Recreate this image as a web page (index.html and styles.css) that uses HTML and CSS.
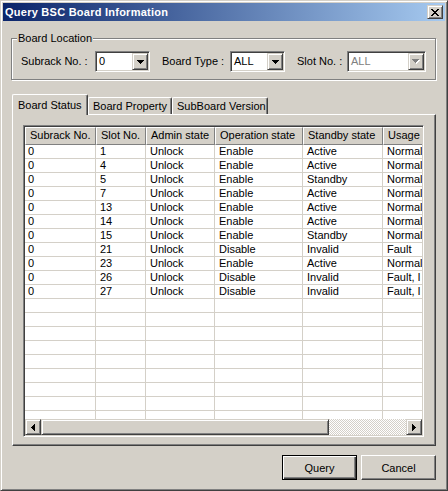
FILE: index.html
```html
<!DOCTYPE html>
<html>
<head>
<meta charset="utf-8">
<title>Query BSC Board Information</title>
<link rel="stylesheet" href="styles.css">
</head>
<body>
<div class="window">
  <div class="titlebar">
    <span class="title">Query BSC Board Information</span>
    <span class="close-btn"><svg width="8" height="7" viewBox="0 0 8 7" shape-rendering="crispEdges"><path fill="#000" d="M0 0h2v1H0zM6 0h2v1H6zM1 1h2v1H1zM5 1h2v1H5zM2 2h4v1H2zM3 3h2v1H3zM2 4h4v1H2zM1 5h2v1H1zM5 5h2v1H5zM0 6h2v1H0zM6 6h2v1H6z"/></svg></span>
  </div>
  <div class="client">
    <div class="group">
      <div class="legend">Board Location</div>
      <div class="loc-row">
        <span class="lbl lbl-subrack">Subrack No. :</span>
        <div class="combo combo-subrack">
          <span class="combo-text">0</span>
          <span class="combo-btn"><svg width="7" height="4" viewBox="0 0 7 4" shape-rendering="crispEdges"><path fill="#000" d="M0 0h7v1H0zM1 1h5v1H1zM2 2h3v1H2zM3 3h1v1H3z"/></svg></span>
        </div>
        <span class="lbl lbl-type">Board Type :</span>
        <div class="combo combo-type">
          <span class="combo-text">ALL</span>
          <span class="combo-btn"><svg width="7" height="4" viewBox="0 0 7 4" shape-rendering="crispEdges"><path fill="#000" d="M0 0h7v1H0zM1 1h5v1H1zM2 2h3v1H2zM3 3h1v1H3z"/></svg></span>
        </div>
        <span class="lbl lbl-slot">Slot No. :</span>
        <div class="combo combo-slot disabled">
          <span class="combo-text">ALL</span>
          <span class="combo-btn"><svg width="8" height="5" viewBox="0 0 8 5" shape-rendering="crispEdges"><path fill="#fff" d="M1 1h7v1H1zM2 2h5v1H2zM3 3h3v1H3zM4 4h1v1H4z"/><path fill="#808080" d="M0 0h7v1H0zM1 1h5v1H1zM2 2h3v1H2zM3 3h1v1H3z"/></svg></span>
        </div>
      </div>
    </div>

    <div class="tabs">
      <div class="tab active tab-status">Board Status</div>
      <div class="tab tab-property">Board Property</div>
      <div class="tab tab-version">SubBoard Version</div>
    </div>

    <div class="panel">
      <div class="list">
        <div class="grid">
          <div class="row head">
            <div class="cell">Subrack No.</div><div class="cell">Slot No.</div><div class="cell">Admin state</div><div class="cell">Operation state</div><div class="cell">Standby state</div><div class="cell">Usage state</div>
          </div>
          <div class="row"><div class="cell">0</div><div class="cell">1</div><div class="cell">Unlock</div><div class="cell">Enable</div><div class="cell">Active</div><div class="cell">Normal</div></div>
          <div class="row"><div class="cell">0</div><div class="cell">4</div><div class="cell">Unlock</div><div class="cell">Enable</div><div class="cell">Active</div><div class="cell">Normal</div></div>
          <div class="row"><div class="cell">0</div><div class="cell">5</div><div class="cell">Unlock</div><div class="cell">Enable</div><div class="cell">Standby</div><div class="cell">Normal</div></div>
          <div class="row"><div class="cell">0</div><div class="cell">7</div><div class="cell">Unlock</div><div class="cell">Enable</div><div class="cell">Active</div><div class="cell">Normal</div></div>
          <div class="row"><div class="cell">0</div><div class="cell">13</div><div class="cell">Unlock</div><div class="cell">Enable</div><div class="cell">Active</div><div class="cell">Normal</div></div>
          <div class="row"><div class="cell">0</div><div class="cell">14</div><div class="cell">Unlock</div><div class="cell">Enable</div><div class="cell">Active</div><div class="cell">Normal</div></div>
          <div class="row"><div class="cell">0</div><div class="cell">15</div><div class="cell">Unlock</div><div class="cell">Enable</div><div class="cell">Standby</div><div class="cell">Normal</div></div>
          <div class="row"><div class="cell">0</div><div class="cell">21</div><div class="cell">Unlock</div><div class="cell">Disable</div><div class="cell">Invalid</div><div class="cell">Fault</div></div>
          <div class="row"><div class="cell">0</div><div class="cell">23</div><div class="cell">Unlock</div><div class="cell">Enable</div><div class="cell">Active</div><div class="cell">Normal</div></div>
          <div class="row"><div class="cell">0</div><div class="cell">26</div><div class="cell">Unlock</div><div class="cell">Disable</div><div class="cell">Invalid</div><div class="cell">Fault, I</div></div>
          <div class="row"><div class="cell">0</div><div class="cell">27</div><div class="cell">Unlock</div><div class="cell">Disable</div><div class="cell">Invalid</div><div class="cell">Fault, I</div></div>
          <div class="row"><div class="cell"></div><div class="cell"></div><div class="cell"></div><div class="cell"></div><div class="cell"></div><div class="cell"></div></div>
          <div class="row"><div class="cell"></div><div class="cell"></div><div class="cell"></div><div class="cell"></div><div class="cell"></div><div class="cell"></div></div>
          <div class="row"><div class="cell"></div><div class="cell"></div><div class="cell"></div><div class="cell"></div><div class="cell"></div><div class="cell"></div></div>
          <div class="row"><div class="cell"></div><div class="cell"></div><div class="cell"></div><div class="cell"></div><div class="cell"></div><div class="cell"></div></div>
          <div class="row"><div class="cell"></div><div class="cell"></div><div class="cell"></div><div class="cell"></div><div class="cell"></div><div class="cell"></div></div>
          <div class="row"><div class="cell"></div><div class="cell"></div><div class="cell"></div><div class="cell"></div><div class="cell"></div><div class="cell"></div></div>
          <div class="row"><div class="cell"></div><div class="cell"></div><div class="cell"></div><div class="cell"></div><div class="cell"></div><div class="cell"></div></div>
          <div class="row"><div class="cell"></div><div class="cell"></div><div class="cell"></div><div class="cell"></div><div class="cell"></div><div class="cell"></div></div>
          <div class="row"><div class="cell"></div><div class="cell"></div><div class="cell"></div><div class="cell"></div><div class="cell"></div><div class="cell"></div></div>
          <div class="row"><div class="cell"></div><div class="cell"></div><div class="cell"></div><div class="cell"></div><div class="cell"></div><div class="cell"></div></div>
        </div>
        <div class="hscroll">
          <span class="sb-btn"><svg width="4" height="7" viewBox="0 0 4 7" shape-rendering="crispEdges"><path fill="#000" d="M3 0h1v7H3zM2 1h1v5H2zM1 2h1v3H1zM0 3h1v1H0z"/></svg></span>
          <span class="sb-thumb"></span>
          <span class="sb-track"></span>
          <span class="sb-btn"><svg width="4" height="7" viewBox="0 0 4 7" shape-rendering="crispEdges"><path fill="#000" d="M0 0h1v7H0zM1 1h1v5H1zM2 2h1v3H2zM3 3h1v1H3z"/></svg></span>
        </div>
      </div>
    </div>

    <div class="buttons">
      <button class="btn default">Query</button>
      <button class="btn">Cancel</button>
    </div>
  </div>
</div>
</body>
</html>
```

FILE: styles.css
```css
* {
  box-sizing: border-box;
}

html,
body {
  margin: 0;
  padding: 0;
  background: #D4D0C8;
}

body {
  font-family: "Liberation Sans", Arial, sans-serif;
  font-size: 11px;
  line-height: 13px;
  color: #000;
}

svg {
  display: block;
}

.window {
  width: 448px;
  height: 491px;
  background: #D4D0C8;
  border: 1px solid;
  border-color: #D4D0C8 #404040 #404040 #D4D0C8;
  box-shadow: inset 1px 1px 0 #fff, inset -1px -1px 0 #808080;
  padding: 2px;
  display: flex;
  flex-direction: column;
}

/* ---------- title bar ---------- */
.titlebar {
  height: 18px;
  flex-shrink: 0;
  display: flex;
  align-items: center;
  justify-content: space-between;
  padding: 0 2px;
  background: linear-gradient(to right, #0A246A, #A6CAF0);
}

.title {
  color: #fff;
  font-weight: bold;
  font-size: 11px;
  line-height: 13px;
  letter-spacing: 0.25px;
}

.close-btn {
  width: 16px;
  height: 14px;
  display: flex;
  align-items: center;
  justify-content: center;
  background: #D4D0C8;
  border: 1px solid;
  border-color: #D4D0C8 #404040 #404040 #D4D0C8;
  box-shadow: inset 1px 1px 0 #fff, inset -1px -1px 0 #808080;
}

/* ---------- client ---------- */
.client {
  flex: 1;
  display: flex;
  flex-direction: column;
  padding: 0 9px 0 8px;
}

/* group box */
.group {
  margin-top: 17px;
  border: 1px solid #808080;
  box-shadow: inset 1px 1px 0 #fff, 1px 1px 0 #fff;
  padding: 0 0 7px 9px;
  display: flex;
  flex-direction: column;
  align-items: flex-start;
}

.legend {
  margin: -7px 0 0 -4px;
  padding: 0 1px;
  background: #D4D0C8;
  line-height: 13px;
}

.loc-row {
  display: flex;
  align-items: center;
  height: 21px;
  margin-top: 6px;
}

.lbl {
  white-space: nowrap;
}

.lbl-subrack { width: 74px; }
.lbl-type { width: 68px; margin-left: 12px; }
.lbl-slot { width: 50px; margin-left: 12px; }

.combo {
  height: 21px;
  display: flex;
  background: #fff;
  border: 1px solid;
  border-color: #808080 #fff #fff #808080;
  box-shadow: inset 1px 1px 0 #404040, inset -1px -1px 0 #D4D0C8;
  padding: 1px;
}

.combo-subrack { width: 55px; }
.combo-type { width: 55px; }
.combo-slot { width: 79px; }

.combo-text {
  flex: 1;
  padding-left: 2px;
  line-height: 17px;
}

.combo.disabled .combo-text {
  color: #808080;
}

.combo-btn {
  width: 16px;
  height: 17px;
  display: flex;
  align-items: center;
  justify-content: center;
  background: #D4D0C8;
  border: 1px solid;
  border-color: #D4D0C8 #404040 #404040 #D4D0C8;
  box-shadow: inset 1px 1px 0 #fff, inset -1px -1px 0 #808080;
}

/* ---------- tabs ---------- */
.tabs {
  display: flex;
  align-items: flex-end;
  height: 20px;
  margin: 14px 0 0 1px;
}

.tab {
  height: 17px;
  border: 1px solid;
  border-color: #fff #404040 transparent #fff;
  border-bottom: none;
  border-radius: 2px 2px 0 0;
  box-shadow: inset -1px 0 0 #808080;
  padding: 2px 0 0 4px;
  white-space: nowrap;
  background: #D4D0C8;
}

.tab.active {
  height: 21px;
  margin-bottom: -1px;
  padding: 4px 0 0 5px;
  position: relative;
  z-index: 1;
}

.tab-status { width: 76px; }
.tab-property { width: 84px; }
.tab-version { width: 96px; }

.panel {
  height: 332px;
  margin-left: 1px;
  border: 1px solid;
  border-color: #fff #404040 #404040 #fff;
  box-shadow: inset -1px -1px 0 #808080;
  padding: 10px 0 0 10px;
}

/* ---------- list view ---------- */
.list {
  width: 401px;
  height: 312px;
  border: 1px solid;
  border-color: #808080 #fff #fff #808080;
  box-shadow: inset 1px 1px 0 #404040, inset -1px -1px 0 #D4D0C8;
  padding: 1px;
  background: #fff;
  display: flex;
  flex-direction: column;
}

.grid {
  flex: 1;
  min-height: 0;
  overflow: hidden;
}

.row {
  display: grid;
  grid-template-columns: 71px 50px 69px 88px 80px 148px;
  width: max-content;
  height: 14px;
}

.cell {
  border-right: 1px solid #D4D0C8;
  border-bottom: 1px solid #D4D0C8;
  padding-left: 4px;
  line-height: 13px;
  white-space: nowrap;
  overflow: hidden;
}

.cell:first-child {
  padding-left: 3px;
}

.row.head {
  height: 18px;
}

.head .cell {
  background: #D4D0C8;
  border-top: 1px solid #fff;
  border-left: 1px solid #fff;
  border-right: 1px solid #808080;
  border-bottom: 1px solid #808080;
  padding-left: 4px;
  line-height: 14px;
}

/* horizontal scrollbar */
.hscroll {
  display: flex;
  height: 16px;
  flex-shrink: 0;
}

.sb-btn,
.sb-thumb {
  height: 16px;
  background: #D4D0C8;
  border: 1px solid;
  border-color: #D4D0C8 #404040 #404040 #D4D0C8;
  box-shadow: inset 1px 1px 0 #fff, inset -1px -1px 0 #808080;
}

.sb-btn {
  width: 16px;
  flex-shrink: 0;
  display: flex;
  align-items: center;
  justify-content: center;
}

.sb-thumb {
  width: 288px;
  flex-shrink: 0;
}

.sb-track {
  flex: 1;
  background: repeating-conic-gradient(#fff 0 25%, #D4D0C8 0 50%) 0 0 / 2px 2px;
}

/* ---------- buttons ---------- */
.buttons {
  display: flex;
  justify-content: flex-end;
  gap: 4px;
  margin-top: 9px;
}

.btn {
  width: 75px;
  height: 25px;
  padding: 0;
  font-family: "Liberation Sans", Arial, sans-serif;
  font-size: 11px;
  color: #000;
  background: #D4D0C8;
  border: 1px solid;
  border-color: #fff #404040 #404040 #fff;
  box-shadow: inset -1px -1px 0 #808080;
}

.btn.default {
  border-color: #000;
  box-shadow: inset 1px 1px 0 #fff, inset -1px -1px 0 #404040, inset -2px -2px 0 #808080;
}
```
